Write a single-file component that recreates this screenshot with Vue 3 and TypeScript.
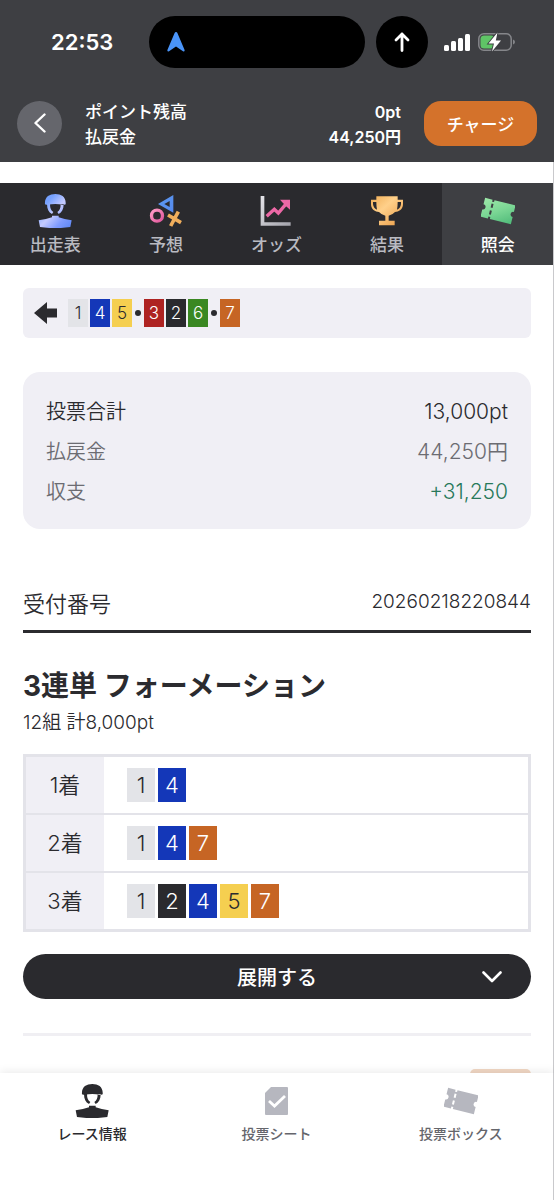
<script setup lang="ts">
import { ref } from 'vue'

type IconName = 'person' | 'marks' | 'chart' | 'trophy' | 'ticket'

const tabs: { label: string; icon: IconName }[] = [
  { label: '出走表', icon: 'person' },
  { label: '予想', icon: 'marks' },
  { label: 'オッズ', icon: 'chart' },
  { label: '結果', icon: 'trophy' },
  { label: '照会', icon: 'ticket' },
]
const activeTab = ref('照会')

const lineup: number[][] = [[1, 4, 5], [3, 2, 6], [7]]

const formation: { place: string; cars: number[] }[] = [
  { place: '1着', cars: [1, 4] },
  { place: '2着', cars: [1, 4, 7] },
  { place: '3着', cars: [1, 2, 4, 5, 7] },
]

const personPath =
  'M136 74C134 52 149 43 167 43S200 52 198 74Q196 76 190 75Q167 71 144 75Q138 76 136 74ZM142 73H151C151 86 154 93 161 97L157 103C147 98 142 88 142 73ZM192 73H183C183 86 180 93 173 97L177 103C187 98 192 88 192 73ZM117 122Q140 119 157 113V108H177V113Q194 119 216 122L212 142Q166 149 121 142Z'
const ticketPath =
  'M-47-29H-24V-23H-18V-29H47V-9A8 8 0 0 0 47 7V29H-18V23H-24V29H-47V7A8 8 0 0 0-47-9ZM-24-17V-5H-18V-17ZM-24 4V16H-18V4Z'
</script>

<template>
  <div class="page">
    <header class="header">
      <div class="status">
        <span class="time">22:53</span>
        <div class="island">
          <svg class="nav-arrow" viewBox="0 0 18 20"><path d="M9 0Q10 0 10.500 1.200L17.600 18Q18 20 16 19.200L9 14.500 2 19.200Q0 20 .4 18L7.500 1.200Q8 0 9 0Z" fill="#4a94f8" /></svg>
        </div>
        <div class="bubble">
          <svg class="up" viewBox="0 0 16 20"><path d="M8 18.500V2M2 8 8 2l6 6" fill="none" stroke="#fff" stroke-width="2.800" stroke-linecap="round" stroke-linejoin="round" /></svg>
        </div>
        <svg class="signal" viewBox="0 0 26 17" fill="#fff">
          <rect x="0" y="11" width="5" height="6" rx="1.500" />
          <rect x="7" y="7" width="5" height="10" rx="1.500" />
          <rect x="14" y="4" width="5" height="13" rx="1.500" />
          <rect x="21" y="0" width="5" height="17" rx="1.500" />
        </svg>
        <svg class="battery" viewBox="0 0 37 20">
          <rect x=".8" y="1.800" width="32.400" height="16.400" rx="5" fill="none" stroke="#85868a" stroke-width="1.500" />
          <path d="M35 7.500q2 .8 2 2.500t-2 2.500Z" fill="#85868a" />
          <rect x="2.500" y="3.500" width="14" height="13" rx="3.500" fill="#5fc466" />
          <path d="M19.500 .5 10.500 11.500H16L14 19.500 23 8.500H17.800Z" fill="#fff" stroke="#3e3f43" stroke-width="1.800" paint-order="stroke" />
        </svg>
      </div>
      <div class="account">
        <button class="back" type="button" aria-label="戻る">
          <svg viewBox="0 0 12 20"><path d="M10.500 1.500 1.500 10l9 8.500" fill="none" stroke="#fff" stroke-width="2.400" stroke-linecap="round" stroke-linejoin="round" /></svg>
        </button>
        <dl class="balance">
          <div><dt>ポイント残高</dt><dd>0pt</dd></div>
          <div><dt>払戻金</dt><dd>44,250円</dd></div>
        </dl>
        <button class="charge" type="button">チャージ</button>
      </div>
    </header>

    <main class="main">
      <nav class="tabs">
        <button
          v-for="tab in tabs"
          :key="tab.label"
          type="button"
          class="tab"
          :class="{ active: tab.label === activeTab }"
          @click="activeTab = tab.label"
        >
          <svg v-if="tab.icon === 'person'" class="tab-icon" viewBox="115 43 102 102">
            <defs><linearGradient id="blue" x1="0" y1="0" x2="1" y2="1"><stop offset="0" stop-color="#6a9cff" /><stop offset=".25" stop-color="#78a2ff" /><stop offset=".5" stop-color="#c5cbff" /><stop offset=".75" stop-color="#7f9bff" /><stop offset="1" stop-color="#5b86f5" /></linearGradient></defs>
            <path :d="personPath" fill="url(#blue)" />
          </svg>
          <svg v-else-if="tab.icon === 'marks'" class="tab-icon" viewBox="446 44 102 102" fill="none">
            <defs>
              <linearGradient id="sky" x1="0" y1="0" x2="1" y2="1"><stop offset="0" stop-color="#5c9af0" /><stop offset="1" stop-color="#5589ee" /></linearGradient>
              <linearGradient id="rose" x1="0" y1="0" x2="1" y2="1"><stop offset="0" stop-color="#ff9dc6" /><stop offset="1" stop-color="#e0569b" /></linearGradient>
            </defs>
            <path fill-rule="evenodd" d="M473 74 519 47V100ZM492 74 508 83V65Z" fill="url(#sky)" />
            <circle cx="470" cy="109" r="16.500" stroke="url(#rose)" stroke-width="10" />
            <path d="M503 107 542 130M534 97 511 140" stroke="#f0ae5c" stroke-width="11" />
          </svg>
          <svg v-else-if="tab.icon === 'chart'" class="tab-icon" viewBox="781 44 102 102" fill="none">
            <defs><linearGradient id="silver" x1="0" y1="0" x2="1" y2="1"><stop offset="0" stop-color="#e6e5ea" /><stop offset="1" stop-color="#a3a3ab" /></linearGradient></defs>
            <path d="M786 50H797V129H876V139H786Z" fill="url(#silver)" />
            <path d="M804 111 827 90 839 101 863 73" stroke="#ed68a6" stroke-width="10" />
            <path d="M844 61H874V91L864 82 853 71Z" fill="#ed68a6" />
          </svg>
          <svg v-else-if="tab.icon === 'trophy'" class="tab-icon" viewBox="282 44 102 102">
            <defs><linearGradient id="gold" x1="0" y1="0" x2="1" y2="1"><stop offset="0" stop-color="#f0ad55" /><stop offset=".4" stop-color="#ffd08a" /><stop offset="1" stop-color="#e89a45" /></linearGradient></defs>
            <path fill-rule="evenodd" d="M301 51H365V61H381V74C381 91 368 97 357 98Q349 107 338 109V124H356V138H309V124H328V109Q317 107 309 98C298 97 285 91 285 74V61H301ZM301 68H291V74Q292 86 303 91Q301 82 301 68ZM365 68H375V74Q374 86 363 91Q365 82 365 68Z" fill="url(#gold)" />
          </svg>
          <svg v-else class="tab-icon" viewBox="615 43 102 102">
            <defs><linearGradient id="green" x1="0" y1="0" x2="1" y2="1"><stop offset="0" stop-color="#9de8a8" /><stop offset=".5" stop-color="#7bd795" /><stop offset="1" stop-color="#4fba79" /></linearGradient></defs>
            <path transform="translate(666 94) rotate(14)" fill-rule="evenodd" :d="ticketPath" fill="url(#green)" />
          </svg>
          <span>{{ tab.label }}</span>
        </button>
      </nav>

      <div class="content">
        <div class="lineup">
          <svg class="left" viewBox="0 0 23 22"><path d="M0 11 13 0V6.500H23V15.500H13V22Z" fill="#2b2b2f" /></svg>
          <template v-for="(group, i) in lineup" :key="i">
            <i v-if="i > 0" class="dot"></i>
            <span v-for="n in group" :key="n" class="car small" :class="'car-' + n">{{ n }}</span>
          </template>
        </div>

        <dl class="summary">
          <div class="total"><dt>投票合計</dt><dd>13,000pt</dd></div>
          <div><dt>払戻金</dt><dd>44,250円</dd></div>
          <div><dt>収支</dt><dd class="plus">+31,250</dd></div>
        </dl>

        <div class="receipt">
          <span class="receipt-label">受付番号</span>
          <span class="receipt-number">20260218220844</span>
        </div>

        <h2 class="title">3連単 フォーメーション</h2>
        <p class="subtitle">12組 計8,000pt</p>

        <table class="formation">
          <tbody>
            <tr v-for="row in formation" :key="row.place">
              <th scope="row">{{ row.place }}</th>
              <td>
                <div class="cars">
                  <span v-for="n in row.cars" :key="n" class="car" :class="'car-' + n">{{ n }}</span>
                </div>
              </td>
            </tr>
          </tbody>
        </table>

        <button class="expand" type="button">
          展開する
          <svg class="chevron" viewBox="0 0 20 12"><path d="M1.500 1.500 10 10l8.500-8.500" fill="none" stroke="#fff" stroke-width="2.600" stroke-linecap="round" stroke-linejoin="round" /></svg>
        </button>

        <hr class="divider" />
        <div class="next"><span class="badge"></span></div>
      </div>
    </main>

    <nav class="bottom">
      <a href="#race" class="item current">
        <svg class="item-icon" viewBox="115 43 102 102"><path :d="personPath" fill="currentColor" /></svg>
        <span>レース情報</span>
      </a>
      <a href="#sheet" class="item">
        <svg class="item-icon" viewBox="0 0 34 34">
          <path d="M12 3H28Q29 3 29 4V30Q29 31 28 31H7Q6 31 6 30V9Z" fill="#b6b7bf" />
          <path d="M10 17 15.500 22 26 12" fill="none" stroke="#fff" stroke-width="2.800" />
        </svg>
        <span>投票シート</span>
      </a>
      <a href="#box" class="item">
        <svg class="item-icon" viewBox="615 43 102 102"><path transform="translate(666 94) rotate(14)" fill-rule="evenodd" :d="ticketPath" fill="#b6b7bf" /></svg>
        <span>投票ボックス</span>
      </a>
    </nav>
  </div>
</template>

<style>
body {
  margin: 0;
  background: #fff;
}
</style>

<style scoped>
* {
  box-sizing: border-box;
}
.page {
  height: 100vh;
  overflow: hidden;
  display: flex;
  flex-direction: column;
  color: #2b2b2f;
  font-family: Inter, "Noto Sans CJK JP", sans-serif;
}
button {
  border: 0;
  padding: 0;
  font: inherit;
  color: #fff;
  cursor: pointer;
}
dl,
dd,
h2,
p {
  margin: 0;
}
svg {
  display: block;
  flex: none;
}
.header {
  flex: none;
  background: #3e3f43;
  color: #fff;
  padding: 16px 17px 12px;
}
.status {
  display: flex;
  align-items: center;
  height: 52px;
}
.time {
  width: 98px;
  margin-left: 34px;
  font-size: 22px;
  font-weight: 600;
}
.island {
  display: flex;
  align-items: center;
  flex: 0 0 216px;
  height: 52px;
  padding-left: 18px;
  border-radius: 26px;
  background: #000;
}
.nav-arrow {
  width: 18px;
  height: 20px;
}
.bubble {
  display: flex;
  align-items: center;
  justify-content: center;
  flex: 0 0 52px;
  height: 52px;
  margin-left: 11px;
  border-radius: 50%;
  background: #000;
}
.up {
  width: 16px;
  height: 20px;
}
.signal {
  width: 26px;
  height: 17px;
  margin-left: 16px;
}
.battery {
  width: 37px;
  height: 20px;
  margin-left: 8px;
}
.account {
  display: flex;
  align-items: center;
  margin-top: 28px;
}
.back {
  display: flex;
  align-items: center;
  justify-content: center;
  width: 45px;
  height: 45px;
  border-radius: 50%;
  background: #65666c;
}
.back svg {
  width: 12px;
  height: 20px;
}
.balance {
  flex: 1;
  padding: 4px 23px 0;
  font-size: 17px;
  font-weight: 500;
  line-height: 25px;
}
.balance div {
  display: flex;
  justify-content: space-between;
}
.balance dd {
  font-size: 16px;
  font-weight: 600;
}
.charge {
  width: 113px;
  height: 45px;
  border-radius: 17px;
  background: #d4722b;
  font-size: 17px;
  font-weight: 500;
}
.main {
  flex: 1;
  min-height: 0;
  overflow: hidden;
  padding-top: 21px;
  border-right: 1px solid #c9c9cc;
}
.tabs {
  display: flex;
  background: #2a2a2e;
}
.tab {
  flex: 1;
  display: flex;
  flex-direction: column;
  align-items: center;
  height: 82px;
  padding-top: 11px;
  background: none;
  color: #b9bac1;
  font-size: 17px;
  font-weight: 500;
  line-height: 34px;
}
.tab.active {
  background: #3e3f43;
  color: #fff;
}
.tab-icon,
.item-icon {
  width: 34px;
  height: 34px;
}
.content {
  padding: 23px 22px 0 23px;
}
.lineup {
  display: flex;
  align-items: center;
  gap: 2px;
  height: 50px;
  padding: 0 11px;
  border-radius: 6px;
  background: #f0eff5;
}
.left {
  width: 23px;
  height: 22px;
  margin-right: 9px;
}
.dot {
  width: 6px;
  height: 6px;
  margin: 0 1px;
  border-radius: 50%;
  background: #2b2b2f;
}
.car {
  width: 28px;
  height: 34px;
  font-size: 22px;
  font-weight: 350;
  line-height: 34px;
  text-align: center;
  color: #fff;
}
.car.small {
  width: 20px;
  height: 28px;
  font-size: 17px;
  line-height: 28px;
}
.car-1 {
  background: #e3e4e8;
  color: #2b2b2f;
}
.car-2 {
  background: #2a2a2e;
}
.car-3 {
  background: #ae2322;
}
.car-4 {
  background: #1437b8;
}
.car-5 {
  background: #f5cf50;
  color: #2b2b2f;
}
.car-6 {
  background: #3a8822;
}
.car-7 {
  background: #c66524;
}
.summary {
  margin-top: 34px;
  padding: 20px 23px 17px;
  border-radius: 17px;
  background: #f0eff5;
  color: #6c6c72;
  font-size: 20px;
  font-weight: 350;
  line-height: 40px;
}
.summary div {
  display: flex;
  justify-content: space-between;
  height: 40px;
}
.summary .total {
  color: #2b2b2f;
}
.summary dd {
  font-size: 21px;
}
.summary .plus {
  color: #28795a;
}
.receipt {
  display: flex;
  align-items: center;
  justify-content: space-between;
  height: 60px;
  margin-top: 44px;
  border-bottom: 3px solid #2b2b2f;
}
.receipt-label {
  font-size: 22px;
  font-weight: 350;
}
.receipt-number {
  font-size: 19px;
  font-weight: 300;
}
.title {
  margin-top: 33px;
  font-size: 28px;
  font-weight: 700;
  line-height: 40px;
}
.subtitle {
  font-size: 19px;
  font-weight: 350;
  line-height: 34px;
}
.formation {
  width: 100%;
  margin-top: 14px;
  border: 3px solid #e3e3e9;
  border-collapse: separate;
  border-spacing: 0;
}
.formation th {
  width: 78px;
  padding: 0;
  background: #f0eff5;
  font-size: 22px;
  font-weight: 350;
  line-height: 34px;
}
.formation td {
  padding: 11px 23px;
}
.formation tr + tr th,
.formation tr + tr td {
  border-top: 2px solid #e3e3e9;
}
.cars {
  display: flex;
  gap: 3px;
}
.expand {
  display: flex;
  align-items: center;
  justify-content: center;
  position: relative;
  width: 100%;
  height: 45px;
  margin-top: 22px;
  border-radius: 23px;
  background: #2a2a2e;
  font-size: 20px;
  font-weight: 500;
}
.chevron {
  position: absolute;
  right: 29px;
  width: 20px;
  height: 12px;
}
.divider {
  height: 3px;
  margin: 34px 0 33px;
  border: 0;
  background: #f0eff3;
}
.next {
  display: flex;
  justify-content: flex-end;
}
.badge {
  width: 61px;
  height: 28px;
  border-radius: 5px;
  background: #f1d7c4;
}
.bottom {
  flex: none;
  position: relative;
  display: flex;
  height: 127px;
  padding-top: 11px;
  border-right: 1px solid #c9c9cc;
  background: #fff;
  box-shadow: 0 -1px 9px rgba(0, 0, 0, 0.09);
}
.item {
  flex: 1;
  display: flex;
  flex-direction: column;
  align-items: center;
  color: #65666c;
  font-size: 14px;
  font-weight: 500;
  line-height: 32px;
  text-decoration: none;
}
.item.current {
  color: #2a2a2e;
}
</style>
